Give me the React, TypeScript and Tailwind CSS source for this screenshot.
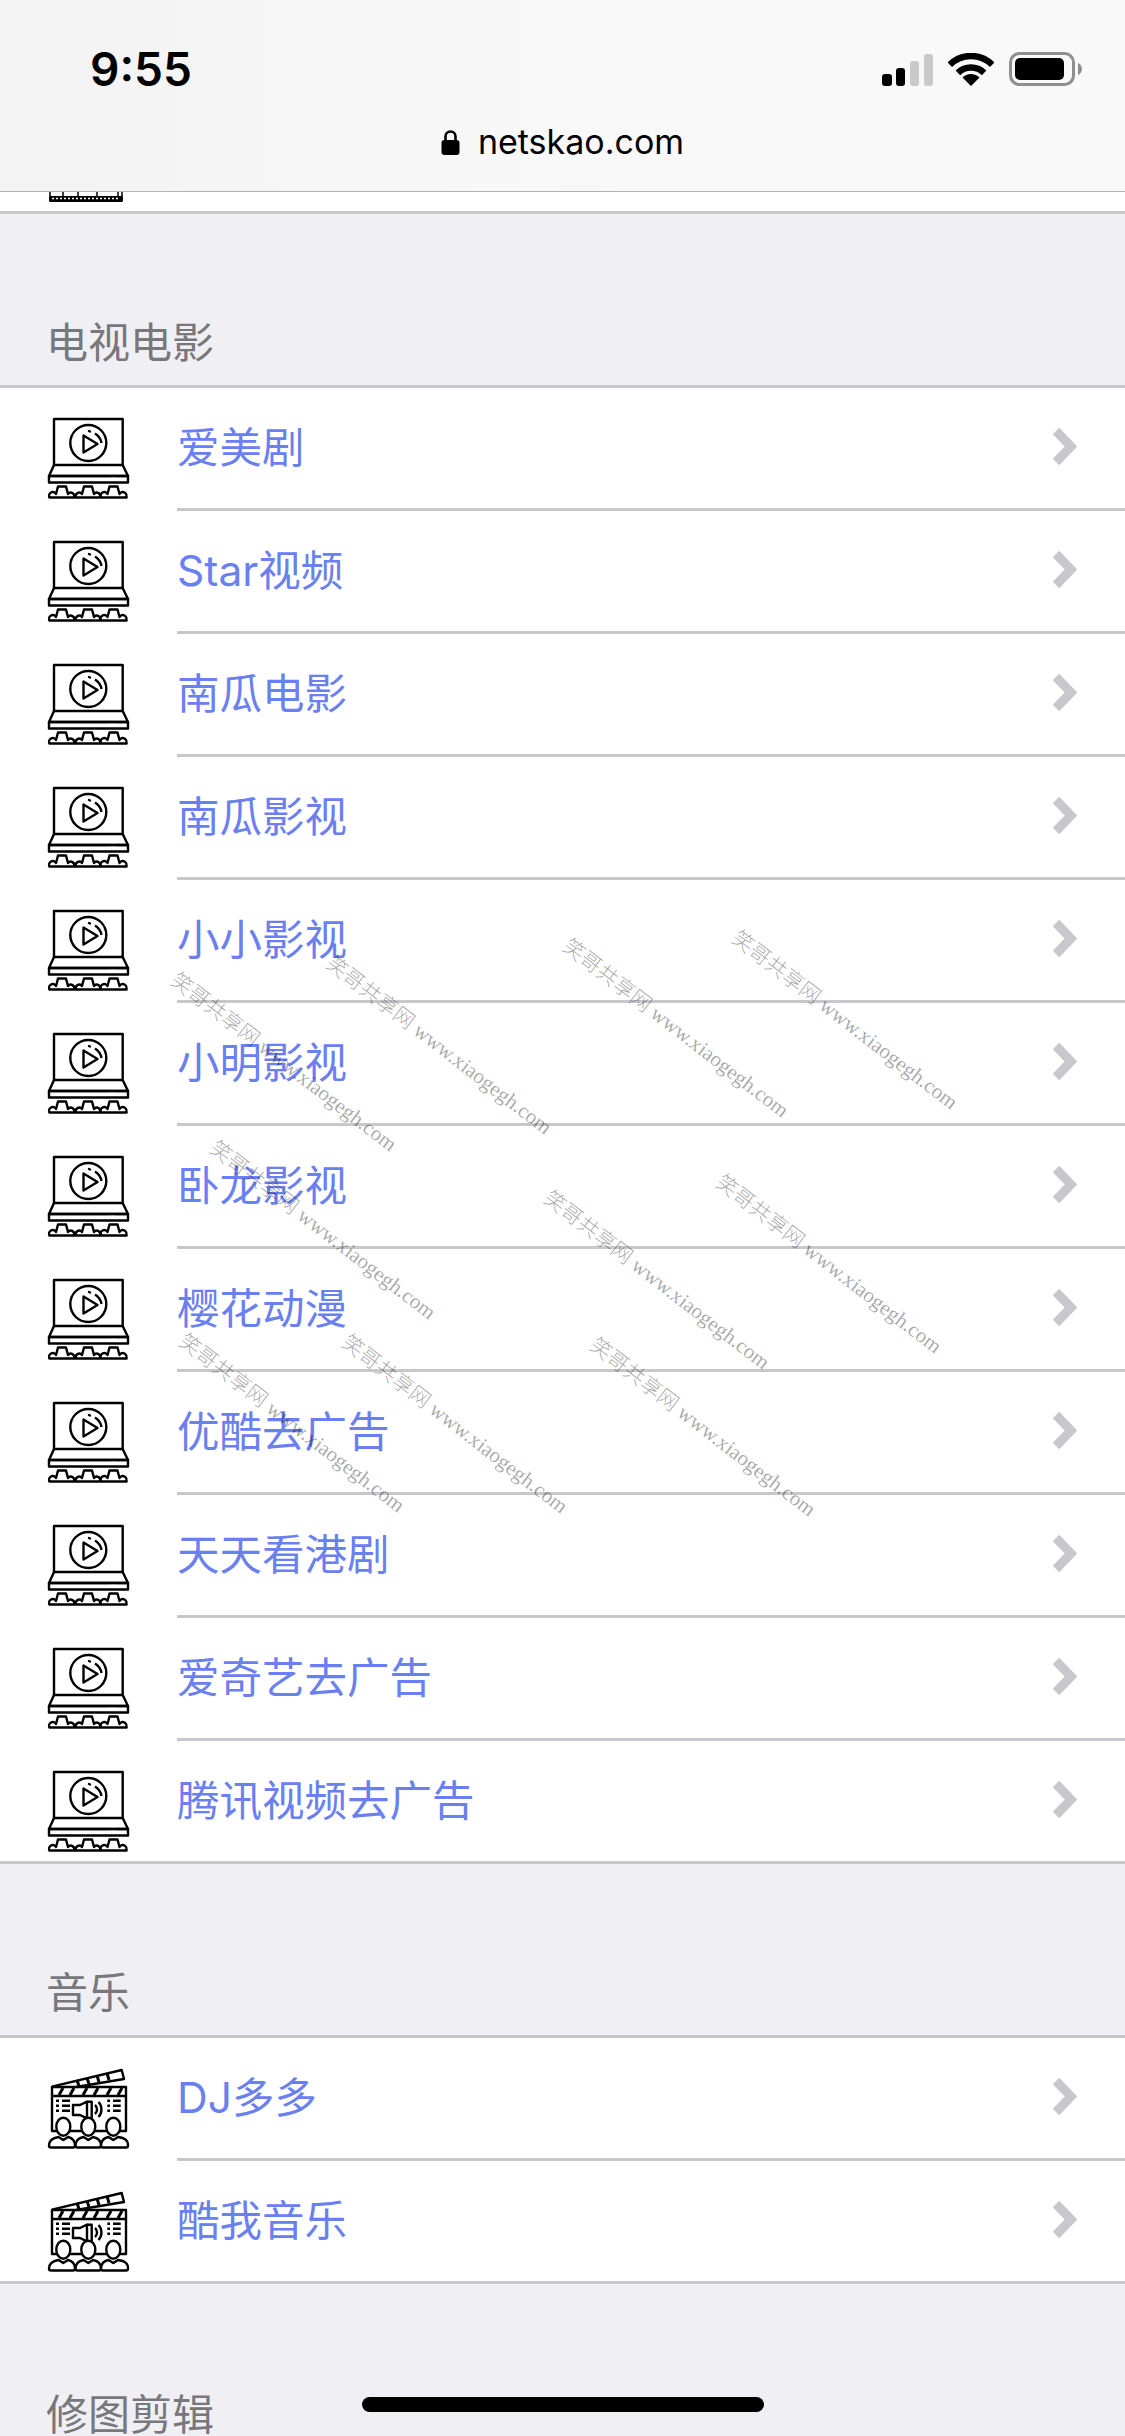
const tvRows = [
  '爱美剧',
  'Star视频',
  '南瓜电影',
  '南瓜影视',
  '小小影视',
  '小明影视',
  '卧龙影视',
  '樱花动漫',
  '优酷去广告',
  '天天看港剧',
  '爱奇艺去广告',
  '腾讯视频去广告',
];

const musicRows = ['DJ多多', '酷我音乐'];

const watermarks = [
  'left-[573px] top-[934px]',
  'left-[742px] top-[926px]',
  'left-[336px] top-[951px]',
  'left-[181px] top-[968px]',
  'left-[220px] top-[1136px]',
  'left-[554px] top-[1186px]',
  'left-[726px] top-[1170px]',
  'left-[189px] top-[1329px]',
  'left-[352px] top-[1330px]',
  'left-[600px] top-[1333px]',
];

function SignalIcon() {
  return (
    <svg width="51" height="32" viewBox="0 0 51 32" className="mt-[1px]">
      <rect x="0" y="20" width="10" height="12" rx="3" fill="#000" />
      <rect x="14" y="14" width="9" height="18" rx="3" fill="#000" />
      <rect x="28" y="7" width="9" height="25" rx="3" fill="#c9c9c9" />
      <rect x="42" y="0" width="9" height="32" rx="3" fill="#c9c9c9" />
    </svg>
  );
}

function WifiIcon() {
  return (
    <svg width="46" height="33" viewBox="0 0 46 33">
      <path d="M1.8 11.8A30 30 0 0 1 44.2 11.8" fill="none" stroke="#000" strokeWidth="6.5" />
      <path d="M9.9 19.9A18.5 18.5 0 0 1 36.1 19.9" fill="none" stroke="#000" strokeWidth="6.5" />
      <path d="M23 33L14.5 24.5A12 12 0 0 1 31.5 24.5Z" fill="#000" />
    </svg>
  );
}

function BatteryIcon() {
  return (
    <svg width="73" height="34" viewBox="0 0 73 34">
      <rect x="1.5" y="1.5" width="63" height="31" rx="9" fill="none" stroke="#8f8f8f" strokeWidth="3" />
      <rect x="6" y="6" width="49" height="22" rx="5" fill="#000" />
      <path d="M69 11C71.5 12 73 14.5 73 17C73 19.5 71.5 22 69 23Z" fill="#8f8f8f" />
    </svg>
  );
}

function LockIcon() {
  return (
    <svg width="19" height="26" viewBox="0 0 19 26">
      <path d="M4.5 13V7.5a5 5 0 0 1 10 0V13" fill="none" stroke="#000" strokeWidth="2.6" />
      <rect x="0.5" y="11" width="18" height="15" rx="3" fill="#000" />
    </svg>
  );
}

function TvIcon() {
  return (
    <svg width="90" height="90" viewBox="0 0 90 90" fill="none" stroke="#000" strokeWidth="2.4" strokeLinejoin="round">
      <rect x="10" y="5" width="68.7" height="46" />
      <circle cx="44.3" cy="29" r="18" />
      <path d="M39.5 21.5V38.500L53.500 30Z" />
      <path d="M51 19.500A14 14 0 0 1 57.500 29" />
      <path d="M45 17L46 17.500" strokeLinecap="round" />
      <path d="M10 51L5 62H84L78.700 51" />
      <rect x="5" y="62" width="79" height="6.500" />
      <path d="M66.500 64.500H71" stroke="#fff" strokeWidth="1.500" />
      <path d="M5.500 83.500H82.500" strokeLinecap="round" />
      <path d="M5.500 83.500A3.500 3.500 0 0 1 12 80L14 72.500H22L24 80A3.500 3.500 0 0 1 30 83.500" />
      <path d="M32 83.500A3.500 3.500 0 0 1 38 80L40 72.500H48L50 80A3.500 3.500 0 0 1 56 83.500" />
      <path d="M57 83.500A3.500 3.500 0 0 1 63.500 80L65.500 72.500H73.500L75.500 80A3.500 3.500 0 0 1 82 83.500" />
    </svg>
  );
}

function FilmIcon() {
  return (
    <svg width="90" height="90" viewBox="0 0 90 90" fill="none" stroke="#000" strokeWidth="2.4" strokeLinejoin="round">
      <path d="M8 22.700L77.700 6L80 15L32 23" />
      <path d="M33 16L35 22M43 14L45 20M53 11.500L55 18M63 9L65 16" strokeWidth="3" />
      <rect x="8" y="23" width="74" height="44" />
      <path d="M8 32H82" />
      <path d="M15 31L19 24M26 31L30 24M39 31L43 24M50 31L54 24M63 31L67 24M74 31L78 24" strokeWidth="3" />
      <path d="M12 36.700H15M18 36.700H26M12 41.700H15M18 41.700H26M12 46.700H15M18 46.700H26" />
      <path d="M63.300 36.700H66M69 36.700H76.700M63.300 41.700H66M69 41.700H76.700M63.300 46.700H66M69 46.700H76.700" />
      <path d="M29 41H36L43 37.700V54.300L36 51H29Z" />
      <path d="M43 37.700H47.700V54.300H43" />
      <path d="M51 41A6 6 0 0 1 51 50M54.500 38A11 11 0 0 1 54.500 53" />
      <ellipse cx="19.300" cy="62.700" rx="7" ry="9" fill="#fff" />
      <ellipse cx="44.300" cy="62.700" rx="7" ry="9" fill="#fff" />
      <ellipse cx="69.300" cy="62.700" rx="7" ry="9" fill="#fff" />
      <path d="M7 83.500H29A2 2 0 0 0 31 81.500C31 76 28 74 24 73L19.300 76L14.500 73C9 74 5 76 5 81.500A2 2 0 0 0 7 83.500Z" fill="#fff" />
      <path d="M33.500 83.500H55A2 2 0 0 0 57 81.500C57 76 54 74 49 73L44.300 76L39.500 73C35 74 31.500 76 31.500 81.500A2 2 0 0 0 33.500 83.500Z" fill="#fff" />
      <path d="M59 83.500H82A2 2 0 0 0 84 81.500C84 76 81 74 74 73L69.300 76L64.500 73C60 74 57 76 57 81.500A2 2 0 0 0 59 83.500Z" fill="#fff" />
    </svg>
  );
}

function Chevron() {
  return (
    <svg width="40" height="50" viewBox="0 0 40 50" fill="none" stroke="#c7c7cc" strokeWidth="9" className="shrink-0">
      <path d="M11 8L26 23.500L11 39" />
    </svg>
  );
}

function Row({ title, icon, last }: { title: string; icon: React.ReactNode; last: boolean }) {
  return (
    <div className={last ? 'flex h-[120px] bg-white' : 'flex h-[123px] bg-white'}>
      <div className="w-[177px] shrink-0 pl-[44px] pt-[26px]">{icon}</div>
      <div className={last ? 'flex-1 flex items-center justify-between pr-[40px]' : 'flex-1 flex items-center justify-between pr-[40px] border-b-[3px] border-[#c7c7cc]'}>
        <span className="text-[42.5px] leading-[56px] text-[#6a80f0]">{title}</span>
        <Chevron />
      </div>
    </div>
  );
}

function SectionLabel({ title }: { title: string }) {
  return (
    <div className="h-[174px] flex items-end pl-[46px] pb-[14px] border-b-[3px] border-[#c7c7cc] text-[42px] leading-[56px] text-[#77777c]">
      {title}
    </div>
  );
}

export default function App() {
  return (
    <div className="relative h-[2436px] w-[1125px] overflow-hidden bg-[#efeff4] font-['Inter','Noto_Sans_CJK_SC',sans-serif]">
      <header className="h-[192px] border-b border-[#b2b2b2] bg-gradient-to-r from-[#f3f3f4] via-[#f8f8f9] to-[#f9f9f9]">
        <div className="flex items-center justify-between pl-[90px] pr-[43px] pt-[52px] h-[86px]">
          <span className="text-[46px] leading-[34px] font-semibold text-black">9:55</span>
          <div className="flex items-center gap-[15px]">
            <SignalIcon />
            <WifiIcon />
            <BatteryIcon />
          </div>
        </div>
        <div className="flex items-center justify-center gap-[18px] mt-[36px]">
          <LockIcon />
          <span className="text-[34px] leading-[40px] text-black">netskao.com</span>
        </div>
      </header>

      <div className="h-[19px] bg-white pl-[49px]">
        <svg width="74" height="10" viewBox="0 0 74 10" className="block">
          <path d="M1 0V5M14 0V5M29 0V5M48 0V5M69 0V5M73 0V5" stroke="#000" strokeWidth="1.500" />
          <rect x="0" y="4" width="74" height="6" rx="1.500" fill="#000" />
          <path d="M3 6.500H71" stroke="#fff" strokeWidth="1.500" strokeDasharray="2 2" />
        </svg>
      </div>
      <div className="h-[3px] bg-[#c7c7cc]" />

      <SectionLabel title="电视电影" />
      <div className="border-b-[3px] border-[#c7c7cc]">
        {tvRows.map((title, i) => (
          <Row key={title} title={title} icon={<TvIcon />} last={i === tvRows.length - 1} />
        ))}
      </div>

      <SectionLabel title="音乐" />
      <div className="border-b-[3px] border-[#c7c7cc]">
        {musicRows.map((title, i) => (
          <Row key={title} title={title} icon={<FilmIcon />} last={i === musicRows.length - 1} />
        ))}
      </div>

      <div className="pt-[103px] pl-[46px] text-[42px] leading-[56px] text-[#77777c]">修图剪辑</div>

      {watermarks.map(pos => (
        <div
          key={pos}
          className={`${pos} absolute origin-top-left rotate-[37.5deg] whitespace-nowrap text-[21px] leading-[24px] font-['Liberation_Serif','Noto_Sans_CJK_SC',serif] font-light text-black/35 pointer-events-none`}
        >
          笑哥共享网 www.xiaogegh.com
        </div>
      ))}

      <div className="absolute left-[362px] top-[2397px] h-[15px] w-[402px] rounded-full bg-black" />
    </div>
  );
}
